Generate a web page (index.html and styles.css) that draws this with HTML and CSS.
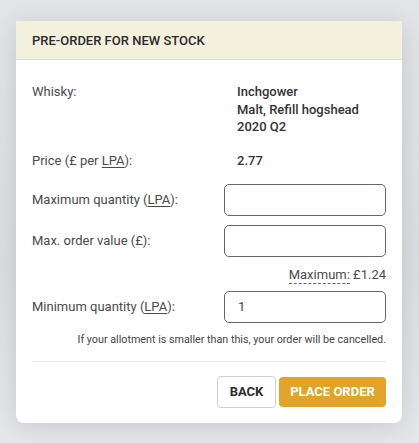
FILE: index.html
```html
<!DOCTYPE html>
<html>
<head>
<meta charset="utf-8">
<link rel="stylesheet" href="styles.css">
</head>
<body>
<div class="card">
  <div class="card-header">PRE-ORDER FOR NEW STOCK</div>
  <div class="card-body">
    <div class="row row-whisky">
      <div class="label">Whisky:</div>
      <div class="value">Inchgower<br>Malt, Refill hogshead<br>2020 Q2</div>
    </div>
    <div class="row row-price">
      <div class="label">Price (£ per <abbr>LPA</abbr>):</div>
      <div class="value">2.77</div>
    </div>
    <div class="row row-maxq">
      <div class="label">Maximum quantity (<abbr>LPA</abbr>):</div>
      <input class="field" type="text">
    </div>
    <div class="row row-maxv">
      <div class="label">Max. order value (£):</div>
      <input class="field" type="text">
    </div>
    <div class="hint"><span class="dashed">Maximum:</span> £1.24</div>
    <div class="row row-minq">
      <div class="label">Minimum quantity (<abbr>LPA</abbr>):</div>
      <input class="field" type="text" value="1">
    </div>
    <div class="help">If your allotment is smaller than this, your order will be cancelled.</div>
    <div class="divider"></div>
    <div class="actions">
      <button class="btn btn-back">BACK</button>
      <button class="btn btn-primary">PLACE ORDER</button>
    </div>
  </div>
</div>
</body>
</html>
```
FILE: styles.css
```css
html, body {
  margin: 0;
  height: 100%;
}
body {
  background: linear-gradient(180deg, #e3e4e8 0%, #dcdde1 60%, #e6e7eb 100%);
  font-family: Roboto, "Noto Sans", sans-serif;
  color: #444;
  padding: 21px 17px 0 16px;
  box-sizing: border-box;
}
.card {
  width: 386px;
  background: #fff;
  border-radius: 0 0 8px 8px;
  box-shadow: 0 4px 24px rgba(0, 0, 0, 0.12);
}
.card-header {
  height: 39px;
  box-sizing: border-box;
  background: #f3f0de;
  border-bottom: 1px solid #dcdcd6;
  padding: 1px 16px 0 16px;
  display: flex;
  align-items: center;
  font-size: 13px;
  font-weight: 500;
  color: #2b2b2b;
}
.card-body {
  padding: 23px 16px 15px 16px;
}
.row {
  display: grid;
  grid-template-columns: 192px 162px;
  align-items: center;
  font-size: 13px;
  line-height: 18px;
}
.row-whisky { align-items: start; line-height: 17.5px; }
.row-price { margin-top: 16px; }
.row-maxq { margin-top: 14px; }
.row-maxv { margin-top: 9px; }
.row-minq { margin-top: 8px; }
.label {
  color: #4a4a4a;
}
.value {
  padding-left: 13px;
  font-weight: 500;
  color: #333;
}
abbr {
  text-decoration: underline;
  text-decoration-thickness: 1px;
  text-underline-offset: 2px;
}
.field {
  box-sizing: border-box;
  width: 162px;
  height: 32px;
  margin: 0;
  border: 1px solid #6b6462;
  border-radius: 5px;
  padding: 0 13px;
  font-family: Roboto, "Noto Sans", sans-serif;
  font-size: 13px;
  color: #444;
  background: #fff;
  outline: none;
}
.hint {
  margin-top: 10px;
  text-align: right;
  font-size: 13px;
  line-height: 16px;
  color: #4a4a4a;
}
.dashed {
  border-bottom: 1px dashed #666;
  padding-bottom: 1px;
}
.help {
  margin-top: 10px;
  text-align: right;
  font-size: 10.75px;
  line-height: 14px;
  color: #444;
}
.divider {
  margin-top: 14px;
  height: 1px;
  background: #e9e9ec;
}
.actions {
  margin-top: 14px;
  display: flex;
  justify-content: flex-end;
  gap: 3px;
}
.btn {
  height: 31px;
  box-sizing: border-box;
  border-radius: 4px;
  font-family: Roboto, "Noto Sans", sans-serif;
  font-size: 13px;
  font-weight: 700;
  padding: 0;
  cursor: pointer;
}
.btn-back {
  width: 59px;
  height: 32px;
  background: #fff;
  border: 1px solid #cfcfcf;
  color: #2b2b2b;
}
.btn-primary {
  width: 107px;
  margin-top: 1px;
  height: 30px;
  background: #e3a228;
  border: none;
  color: #fff;
}
```
